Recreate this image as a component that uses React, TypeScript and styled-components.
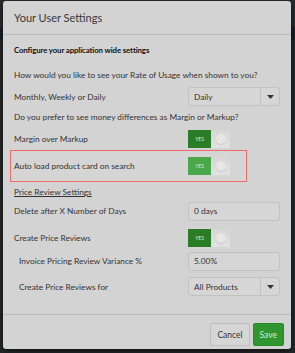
import styled, { createGlobalStyle } from 'styled-components';

const Global = createGlobalStyle`
  html, body {
    margin: 0;
    padding: 0;
    width: 295px;
    height: 353px;
    overflow: hidden;
  }
  body {
    background: linear-gradient(#2a2b2c 0, #2a2b2c 27px, #17202b 27px, #17202b 40px, #262728 40px);
    font-family: Lato, "Noto Sans", sans-serif;
    color: #333;
  }
`;

const Page = styled.div`
  padding: 1px 4px 0 3px;
  height: 353px;
  box-sizing: border-box;
`;

const Modal = styled.div`
  width: 288px;
  height: 348px;
  background: #d3d3d3;
  border-radius: 3px;
  box-shadow: 0 2px 6px rgba(0, 0, 0, 0.6);
  display: flex;
  flex-direction: column;
`;

const Header = styled.div`
  height: 33px;
  padding: 0 11px;
  display: flex;
  align-items: center;
  border-bottom: 1px solid #bcbcbc;
  font-size: 11px;
  color: #3a3a3a;
`;

const Body = styled.div`
  flex: 1;
  padding: 5px 11px 0 11px;
  display: flex;
  flex-direction: column;
`;

const Title = styled.div`
  height: 20px;
  line-height: 20px;
  font-size: 7.8px;
  letter-spacing: -0.1px;
  font-weight: 700;
  color: #111;
  margin-bottom: 9px;
`;

const Question = styled.div<{ $mt?: number }>`
  font-size: 8.3px;
  height: 13px;
  line-height: 13px;
  margin-top: ${(p) => p.$mt ?? 0}px;
  white-space: nowrap;
`;

const Row = styled.div<{ $indent?: boolean; $h?: number; $mt?: number }>`
  display: flex;
  align-items: center;
  justify-content: space-between;
  height: ${(p) => p.$h ?? 18}px;
  margin-top: ${(p) => p.$mt ?? 0}px;
  padding-left: ${(p) => (p.$indent ? 5 : 0)}px;
`;

const Highlight = styled.div`
  display: flex;
  align-items: center;
  justify-content: space-between;
  height: 32px;
  margin: 2px 33px 0 -4px;
  padding-left: 3px;
  border: 1px solid #f06a6a;
  box-sizing: border-box;
  background: #d5d5d5;
`;

const Label = styled.span`
  font-size: 8.3px;
  white-space: nowrap;
`;

const SubHeading = styled.div`
  font-size: 8.3px;
  text-decoration: underline;
  height: 14px;
  line-height: 14px;
  margin-top: 3px;
`;

const Control = styled.div<{ $w?: number }>`
  width: ${(p) => p.$w ?? 92}px;
  display: flex;
`;

const Field = styled.div`
  width: 92px;
  height: 19px;
  border: 1px solid #c2c2c2;
  border-radius: 3px;
  box-sizing: border-box;
  background: #d6d6d6;
  display: flex;
  align-items: center;
  font-size: 8.3px;
`;

const FieldText = styled.span`
  flex: 1;
  padding-left: 5px;
`;

const Caret = styled.span`
  width: 18px;
  height: 100%;
  border-left: 1px solid #c2c2c2;
  display: flex;
  align-items: center;
  justify-content: center;
`;

const Toggle = styled.div`
  width: 42px;
  height: 18px;
  display: flex;
`;

const ToggleOn = styled.div<{ $light?: boolean }>`
  width: 23px;
  background: ${(p) => (p.$light ? '#4aa84a' : '#2a7d26')};
  color: #d8ecd6;
  font-size: 5px;
  display: flex;
  align-items: center;
  justify-content: center;
`;

const ToggleOff = styled.div`
  flex: 1;
  background: linear-gradient(#d6d6d6, #e2e2e2);
  display: flex;
  align-items: center;
  justify-content: center;
`;

const Knob = styled.div`
  width: 10px;
  height: 10px;
  border-radius: 50%;
  background: #e6e6e6;
  box-shadow: 0 1px 1px rgba(0, 0, 0, 0.1);
`;

const Footer = styled.div`
  height: 35px;
  border-top: 1px solid #bcbcbc;
  display: flex;
  justify-content: flex-end;
  align-items: flex-start;
  gap: 3px;
  padding: 8px 7px 0 0;
  box-sizing: border-box;
`;

const Button = styled.button<{ $primary?: boolean }>`
  height: 23px;
  padding: 0 6px;
  font-family: inherit;
  font-size: 8.5px;
  border-radius: 2px;
  border: 1px solid ${(p) => (p.$primary ? '#2a8a2a' : '#bdbdbd')};
  background: ${(p) => (p.$primary ? '#2f952f' : '#d6d6d6')};
  color: ${(p) => (p.$primary ? '#d6ecd4' : '#333')};
`;

const Select = ({ value }: { value: string }) => (
  <Field>
    <FieldText>{value}</FieldText>
    <Caret>
      <svg width="7" height="4" viewBox="0 0 7 4">
        <path d="M0 0h7L3.5 4z" fill="#333" />
      </svg>
    </Caret>
  </Field>
);

const Switch = ({ light, width }: { light?: boolean; width?: number }) => (
  <Control $w={width}>
    <Toggle>
      <ToggleOn $light={light}>YES</ToggleOn>
      <ToggleOff>
        <Knob />
      </ToggleOff>
    </Toggle>
  </Control>
);

export default function App() {
  return (
    <Page>
      <Global />
      <Modal>
        <Header>Your User Settings</Header>
        <Body>
          <Title>Configure your application wide settings</Title>
          <Question>How would you like to see your Rate of Usage when shown to you?</Question>
          <Row $h={19} $mt={5}>
            <Label>Monthly, Weekly or Daily</Label>
            <Select value="Daily" />
          </Row>
          <Question $mt={5}>Do you prefer to see money differences as Margin or Markup?</Question>
          <Row $mt={6}>
            <Label>Margin over Markup</Label>
            <Switch />
          </Row>
          <Highlight>
            <Label>Auto load product card on search</Label>
            <Switch light width={58} />
          </Highlight>
          <SubHeading>Price Review Settings</SubHeading>
          <Row $mt={3}>
            <Label>Delete after X Number of Days</Label>
            <Field>
              <FieldText>0 days</FieldText>
            </Field>
          </Row>
          <Row $mt={9}>
            <Label>Create Price Reviews</Label>
            <Switch />
          </Row>
          <Row $indent $mt={5}>
            <Label>Invoice Pricing Review Variance %</Label>
            <Field>
              <FieldText>5.00%</FieldText>
            </Field>
          </Row>
          <Row $indent $h={19} $mt={7}>
            <Label>Create Price Reviews for</Label>
            <Select value="All Products" />
          </Row>
        </Body>
        <Footer>
          <Button>Cancel</Button>
          <Button $primary>Save</Button>
        </Footer>
      </Modal>
    </Page>
  );
}
